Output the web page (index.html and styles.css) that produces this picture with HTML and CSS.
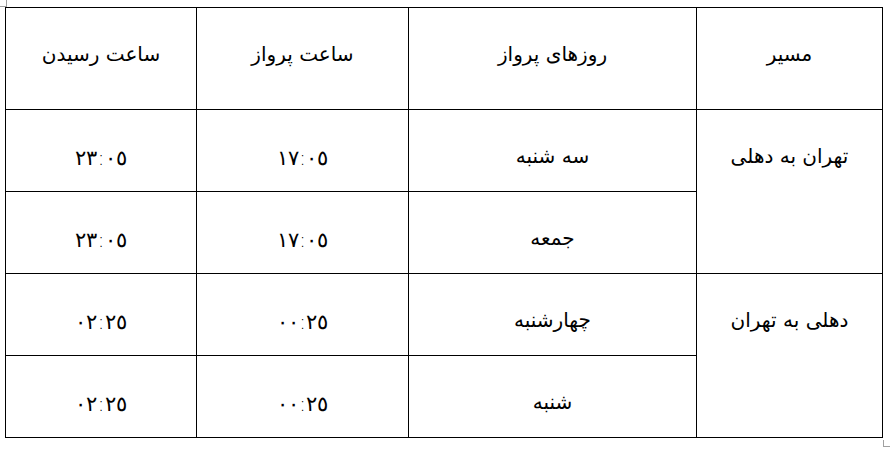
FILE: index.html
```html
<!DOCTYPE html>
<html lang="fa" dir="rtl">
<head>
<meta charset="utf-8">
<title>جدول پرواز</title>
<link rel="stylesheet" href="styles.css">
</head>
<body>
<span class="mark mark-tl"></span>
<table class="flights">
  <colgroup>
    <col class="c-route">
    <col class="c-days">
    <col class="c-dep">
    <col class="c-arr">
  </colgroup>
  <tr class="head">
    <td>مسیر</td>
    <td>روزهای پرواز</td>
    <td>ساعت پرواز</td>
    <td>ساعت رسیدن</td>
  </tr>
  <tr>
    <td rowspan="2">تهران به دهلی</td>
    <td>سه شنبه</td>
    <td class="num">١٧:٠٥</td>
    <td class="num">٢٣:٠٥</td>
  </tr>
  <tr>
    <td>جمعه</td>
    <td class="num">١٧:٠٥</td>
    <td class="num">٢٣:٠٥</td>
  </tr>
  <tr>
    <td rowspan="2">دهلی به تهران</td>
    <td>چهارشنبه</td>
    <td class="num">٠٠:٢٥</td>
    <td class="num">٠٢:٢٥</td>
  </tr>
  <tr>
    <td>شنبه</td>
    <td class="num">٠٠:٢٥</td>
    <td class="num">٠٢:٢٥</td>
  </tr>
</table>
<span class="mark mark-br"></span>
</body>
</html>
```
FILE: styles.css
```css
html, body {
  margin: 0;
  padding: 0;
  background: #fff;
}
body {
  position: relative;
  width: 891px;
  height: 463px;
  font-family: "DejaVu Sans", "Liberation Sans", sans-serif;
  color: #000;
}
.flights {
  position: relative;
  margin: 7px 8px 0 0;
  border-collapse: collapse;
  table-layout: fixed;
  width: 877px;
}
.c-route { width: 186px; }
.c-days { width: 288px; }
.c-dep { width: 212px; }
.c-arr { width: 191px; }
.flights td {
  border: 1px solid #000;
  text-align: center;
  vertical-align: top;
  padding: 33px 4px 0;
  height: 82px;
  box-sizing: border-box;
  font-size: 20px;
  line-height: 26px;
}
.flights .head td {
  height: 102px;
  padding-top: 33px;
}
.flights td.num {
  padding-top: 35px;
  font-family: "DejaVu Sans Light", "DejaVu Sans", sans-serif;
  font-weight: 200;
  font-size: 21px;
  letter-spacing: 1px;
}
.mark {
  position: absolute;
  width: 6px;
  height: 6px;
  border-color: #a0a0a0;
  border-style: solid;
}
.mark-tl {
  left: 0;
  top: 0;
  border-width: 0 0 1px 1px;
  transform: scaleX(-1);
}
.mark-br {
  left: 883px;
  top: 440px;
  border-width: 0 0 1px 1px;
}
```
